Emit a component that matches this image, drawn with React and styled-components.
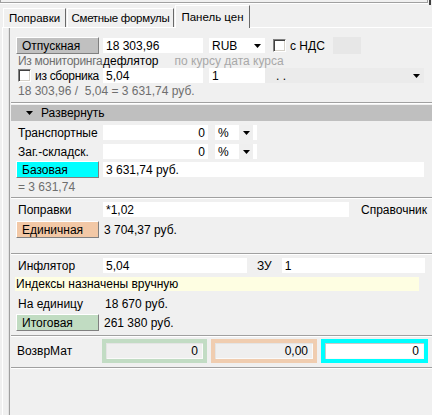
import React from "react"
import styled, { createGlobalStyle } from "styled-components"

const GlobalStyle = createGlobalStyle`
  body {
    margin: 0;
    background: #f0f0f0;
    font: 12px "Liberation Sans", Arial, sans-serif;
    color: #000;
  }
`

const Window = styled.div`
  width: 432px;
  height: 415px;
  background: #f0f0f0;
  overflow: hidden;
  position: relative;
`

const TopEdge = styled.div`
  height: 2px;
  width: 426px;
  border: 1px solid #a0a0a0;
  border-top: none;
  box-shadow: 0 1px 0 #fff;
`

const CornerMark = styled.div`
  position: absolute;
  top: 0;
  right: 1px;
  width: 2px;
  height: 5px;
  background: #404040;
`

const TabStrip = styled.div`
  display: flex;
  align-items: flex-end;
  height: 24px;
  padding-left: 3px;
`

const Tab = styled.div`
  width: ${p => p.$w}px;
  height: ${p => (p.$active ? 23 : 19)}px;
  display: flex;
  align-items: center;
  justify-content: center;
  box-sizing: border-box;
  border-top: 1px solid #fff;
  border-left: 1px solid #fff;
  border-right: 1px solid #696969;
  background: #f0f0f0;
  margin-right: ${p => (p.$active ? 0 : 1)}px;
  white-space: nowrap;
  font-size: 11.5px;
  letter-spacing: ${p => p.$ls || 0}px;
  position: relative;
  z-index: ${p => (p.$active ? 2 : 1)};
  ${p => p.$active && "margin-bottom: -1px; padding-bottom: 1px;"}
`

const Panel = styled.div`
  margin-left: 2px;
  border-top: 1px solid #fff;
  border-left: 1px solid #fff;
  height: 390px;
`

const Content = styled.div`
  margin-left: 6px;
  border-left: 1px solid #a0a0a0;
  box-shadow: -1px 0 0 #e3e3e3;
  height: 100%;
  padding-top: 9px;
  display: flex;
  flex-direction: column;
`

const Row = styled.div`
  display: flex;
  align-items: center;
  height: ${p => p.$h || 15}px;
  margin-top: ${p => p.$mt || 0}px;
  padding-left: ${p => (p.$pl === undefined ? 6 : p.$pl)}px;
  flex-shrink: 0;
`

const Label = styled.div`
  width: ${p => p.$w || 87}px;
  padding-left: ${p => (p.$pl === undefined ? 2 : p.$pl)}px;
  box-sizing: border-box;
  flex-shrink: 0;
  white-space: nowrap;
  letter-spacing: ${p => p.$ls || 0}px;
  color: ${p => p.$color || "#000"};
`

const Text = styled.span`
  white-space: nowrap;
  color: ${p => p.$color || "#000"};
  margin-left: ${p => p.$ml || 0}px;
`

const ColorButton = styled.div`
  width: 83px;
  height: ${p => p.$h || 17}px;
  box-sizing: border-box;
  background: ${p => p.$bg};
  border-top: 1px solid #fff;
  border-left: 1px solid #fff;
  border-right: 1px solid #808080;
  border-bottom: 1px solid #808080;
  padding-left: 5px;
  display: flex;
  align-items: center;
  margin-right: 4px;
  flex-shrink: 0;
`

const Field = styled.div`
  width: ${p => p.$w}px;
  height: ${p => p.$h || 15}px;
  background: ${p => p.$bg || "#fff"};
  margin-left: ${p => p.$ml || 0}px;
  display: flex;
  align-items: center;
  justify-content: ${p => (p.$right ? "flex-end" : "flex-start")};
  padding: 0 3px;
  box-sizing: border-box;
  flex-shrink: 0;
  white-space: nowrap;
`

const Combo = styled(Field)`
  justify-content: space-between;
  padding-right: 4px;
`

const ArrowCell = styled.div`
  width: 14px;
  height: 100%;
  background: ${p => p.$bg || "transparent"};
  display: flex;
  align-items: center;
  justify-content: center;
`

const Arrow = () => (
  <svg width="7" height="4" viewBox="0 0 7 4">
    <path d="M0 0H7L3.5 4Z" fill="#000" />
  </svg>
)

const CheckBox = styled.div`
  width: 13px;
  height: 13px;
  box-sizing: border-box;
  background: #fff;
  border-top: 1px solid #808080;
  border-left: 1px solid #808080;
  border-right: 1px solid #fff;
  border-bottom: 1px solid #fff;
  box-shadow: inset 1px 1px 0 #404040, inset -1px -1px 0 #d4d0c8;
  margin-left: ${p => p.$ml || 0}px;
  margin-right: 4px;
  flex-shrink: 0;
`

const Separator = styled.div`
  height: 1px;
  margin-left: 1px;
  margin-top: ${p => p.$mt || 0}px;
  background: #a0a0a0;
  border-bottom: 1px solid #fff;
  flex-shrink: 0;
`

const Header = styled.div`
  height: 16px;
  margin-top: 1px;
  margin-left: 1px;
  background: #bfbfbf;
  display: flex;
  align-items: center;
  padding-left: 15px;
  gap: 8px;
  flex-shrink: 0;
`

const Notice = styled.div`
  width: 403px;
  height: 14px;
  margin-left: 5px;
  margin-top: ${p => p.$mt || 0}px;
  padding-left: 1px;
  background: #fefee2;
  display: flex;
  align-items: center;
  flex-shrink: 0;
`

const FrameBox = styled.div`
  width: ${p => p.$w}px;
  height: 24px;
  box-sizing: border-box;
  border: 4px solid ${p => p.$color};
  background: ${p => p.$bg || "#efefef"};
  box-shadow: inset 1px 1px 0 ${p => p.$inner || "#e4e4e4"}, inset -1px -1px 0 #fafafa;
  margin-left: ${p => p.$ml || 0}px;
  display: flex;
  align-items: center;
  justify-content: flex-end;
  padding-right: 5px;
  flex-shrink: 0;
`

const PercentCombo = ({ ml }) => (
  <Combo $w={42} $ml={ml}>
    %
    <ArrowCell $bg="#efefef">
      <Arrow />
    </ArrowCell>
  </Combo>
)

export default function App() {
  return (
    <Window>
      <GlobalStyle />
      <TopEdge />
      <CornerMark />
      <TabStrip>
        <Tab $w={63}>Поправки</Tab>
        <Tab $w={107} $ls={-0.3}>
          Сметные формулы
        </Tab>
        <Tab $w={75} $active>
          Панель цен
        </Tab>
      </TabStrip>
      <Panel>
        <Content>
          <Row $h={17}>
            <ColorButton $bg="#c0c0c0">Отпускная</ColorButton>
            <Field $w={100}>18 303,96</Field>
            <Combo $w={56} $ml={6}>
              RUB
              <Arrow />
            </Combo>
            <CheckBox $ml={8} />
            <Text>с НДС</Text>
            <Field $w={28} $h={17} $ml={8} $bg="#e7e7e7" />
          </Row>
          <Row $h={13}>
            <Label $color="#6e6e6e" $ls={-0.3}>
              Из мониторинга
            </Label>
            <Text>дефлятор</Text>
            <Text $color="#a8a8a8" $ml={16}>
              по курсу дата курса
            </Text>
          </Row>
          <Row $h={17}>
            <Label $pl={2} $ls={-0.3}>
              <Row $h={13} $pl={0}>
                <CheckBox />
                <Text>из сборника</Text>
              </Row>
            </Label>
            <Field $w={100}>5,04</Field>
            <Field $w={56} $ml={6}>1</Field>
            <Combo $w={159} $bg="#ebebeb">
              <Text $ml={8}>. .</Text>
              <Arrow />
            </Combo>
          </Row>
          <Row $h={14}>
            <Label $color="#6e6e6e" $w={300}>
              18 303,96 /&nbsp; 5,04 = 3 631,74 руб.
            </Label>
          </Row>
          <Separator $mt={4} />
          <Header>
            <Arrow />
            <span>Развернуть</span>
          </Header>
          <Row $mt={4}>
            <Label>Транспортные</Label>
            <Field $w={105} $right>0</Field>
            <PercentCombo ml={7} />
          </Row>
          <Row $mt={4}>
            <Label>Заг.-складск.</Label>
            <Field $w={105} $right>0</Field>
            <PercentCombo ml={7} />
          </Row>
          <Row $h={17} $mt={2}>
            <ColorButton $bg="#00ffff">Базовая</ColorButton>
            <Field $w={321}>3 631,74 руб.</Field>
          </Row>
          <Row $h={15} $mt={1}>
            <Label $color="#6e6e6e">= 3 631,74</Label>
          </Row>
          <Separator $mt={3} />
          <Row $mt={3}>
            <Label>Поправки</Label>
            <Field $w={246}>*1,02</Field>
            <Text $ml={12}>Справочник</Text>
          </Row>
          <Row $h={17} $mt={4}>
            <ColorButton $bg="#f2c8a6">Единичная</ColorButton>
            <Text $ml={1}>3 704,37 руб.</Text>
          </Row>
          <Separator $mt={15} />
          <Row $mt={3}>
            <Label>Инфлятор</Label>
            <Field $w={144}>5,04</Field>
            <Text $ml={10}>ЗУ</Text>
            <Field $w={143} $ml={10}>1</Field>
          </Row>
          <Notice $mt={4}>Индексы назначены вручную</Notice>
          <Row $h={14} $mt={6}>
            <Label>На единицу</Label>
            <Text $ml={2}>18 670 руб.</Text>
          </Row>
          <Row $h={17} $mt={3}>
            <ColorButton $bg="#c1dcc2">Итоговая</ColorButton>
            <Text $ml={1}>261 380 руб.</Text>
          </Row>
          <Separator $mt={4} />
          <Row $h={24} $mt={2}>
            <Label $w={86} $pl={1}>
              ВозврМат
            </Label>
            <FrameBox $w={105} $color="#c2dcc4">0</FrameBox>
            <FrameBox $w={106} $ml={4} $color="#f0cdb0">0,00</FrameBox>
            <FrameBox $w={107} $ml={4} $color="#00ffff" $bg="#fff" $inner="#c8c8c8">
              0
            </FrameBox>
          </Row>
          <Separator $mt={4} />
        </Content>
      </Panel>
    </Window>
  )
}
